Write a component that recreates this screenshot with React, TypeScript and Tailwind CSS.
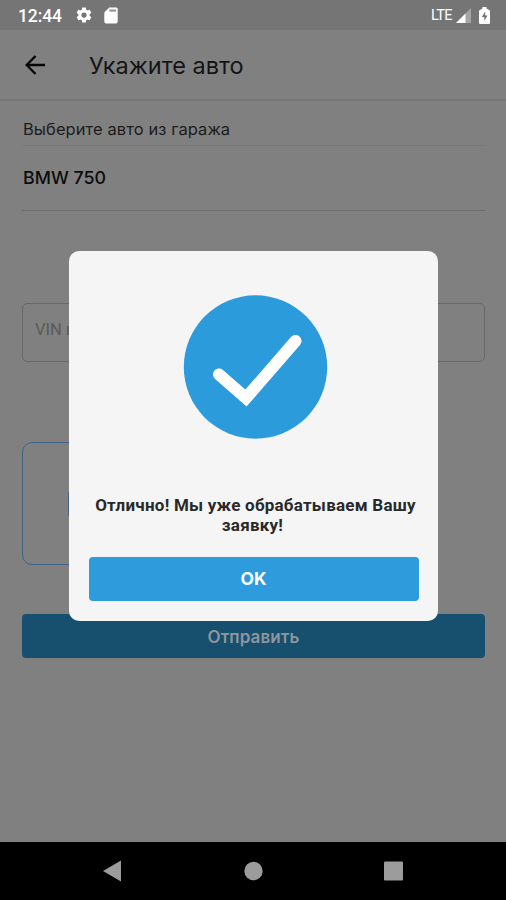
import React from "react";

function StatusBar() {
  return (
    <div className="flex h-[30px] shrink-0 items-center justify-between bg-[#757575] pl-[18px] pr-[16px] text-white">
      <div className="flex items-center">
        <span className="w-[57px] whitespace-nowrap pt-px font-['Roboto'] text-[17.5px] font-medium leading-[30px] tracking-[-0.1px]">12:44</span>
        <svg width="18" height="18" viewBox="0 0 24 24" fill="currentColor">
          <path d="M19.43 12.98c.04-.32.07-.64.07-.98s-.03-.66-.07-.98l2.11-1.65c.19-.15.24-.42.12-.64l-2-3.46c-.12-.22-.39-.3-.61-.22l-2.49 1c-.52-.4-1.08-.73-1.69-.98l-.38-2.65A.49.49 0 0 0 14 2h-4c-.25 0-.46.18-.49.42l-.38 2.65c-.61.25-1.17.59-1.69.98l-2.49-1c-.23-.09-.49 0-.61.22l-2 3.46c-.13.22-.07.49.12.64l2.11 1.65c-.04.32-.07.65-.07.98s.03.66.07.98l-2.11 1.65c-.19.15-.24.42-.12.64l2 3.46c.12.22.39.3.61.22l2.49-1c.52.4 1.08.73 1.69.98l.38 2.65c.03.24.24.42.49.42h4c.25 0 .46-.18.49-.42l.38-2.65c.61-.25 1.17-.59 1.69-.98l2.49 1c.23.09.49 0 .61-.22l2-3.46c.12-.22.07-.49-.12-.64l-2.11-1.65zM12 15.5a3.5 3.5 0 1 1 0-7 3.5 3.5 0 0 1 0 7z" />
        </svg>
        <svg className="ml-[8px]" width="20" height="19" viewBox="0 0 24 24" preserveAspectRatio="none" fill="currentColor">
          <path d="M18 2h-8L4.02 8 4 20c0 1.100.9 2 2 2h12c1.100 0 2-.9 2-2V4c0-1.100-.9-2-2-2z" />
          <path d="M10 4.300h8v2.900h-8z" fill="#9a9a9a" />
        </svg>
      </div>
      <div className="flex items-center">
        <span className="w-[25px] whitespace-nowrap pt-px font-['Roboto'] text-[14.500px] leading-[30px] tracking-[-0.6px]">LTE</span>
        <svg width="15" height="15" viewBox="0 0 15 15">
          <path d="M15 0v15H0z" fill="#a5a5a5" />
          <path d="M9.500 5.500V15H0z" fill="#fff" />
        </svg>
        <svg className="ml-[8px]" width="11" height="17" viewBox="0 0 11 17">
          <path d="M3.500 0h4v1.500L10.200 3q.8.300.8 1v12q0 1-1 1H1q-1 0-1-1V4q0-.7.8-1l2.700-1.500z" fill="#fff" />
          <path d="M6.200 4.500 2.800 10h2.500v4l3.200-5.500H6.200z" fill="#757575" />
        </svg>
      </div>
    </div>
  );
}

function NavBar() {
  return (
    <div className="flex h-[58px] shrink-0 items-center justify-center bg-black">
      <svg className="w-full" height="58" viewBox="0 0 506 58" fill="#9c9c9c">
        <path d="M103 29 121 18.500v21z" />
        <circle cx="253.500" cy="29" r="9.200" />
        <rect x="384" y="19.500" width="19" height="19" rx="1" />
      </svg>
    </div>
  );
}

function SuccessDialog() {
  return (
    <div className="absolute left-[69px] top-[251px] flex h-[370px] w-[369px] flex-col items-center rounded-[10px] bg-[#f5f5f5] px-[19px] pt-[44px]">
      <svg width="145" height="144" viewBox="0 0 145 144" className="ml-[4px] shrink-0">
        <circle cx="72.500" cy="72" r="71.700" fill="#2b9bdc" />
        <path d="M36 79.500 63 103 112.500 46" fill="none" stroke="#fff" strokeWidth="12" strokeLinecap="round" strokeLinejoin="miter" />
      </svg>
      <p className="mt-[56px] flex flex-col items-center whitespace-nowrap text-center font-['Roboto'] text-[17px] font-bold leading-[20px] tracking-[0.23px] text-[#292929]">
        <span className="pl-[4px]">Отлично! Мы уже обрабатываем Вашу</span>
        <span className="pr-[2px]">заявку!</span>
      </p>
      <button className="mt-[22px] h-[44px] w-[330px] shrink-0 rounded-[4px] bg-[#2e9bdc] font-['Inter'] text-[17.5px] font-bold leading-[44px] text-white">OK</button>
    </div>
  );
}

export default function App() {
  return (
    <div className="relative flex h-[900px] w-[506px] flex-col overflow-hidden bg-[#808080] font-['Inter',sans-serif]">
      <StatusBar />
      <header className="flex h-[71px] shrink-0 items-center border-b-2 border-[#777777] pl-[25px]">
        <svg width="21" height="20" viewBox="0 0 21 20" fill="none" stroke="#050505" strokeWidth="2.300">
          <path d="M20 10H2M10.500 1 1.700 10l8.800 9" />
        </svg>
        <h1 className="ml-[43px] whitespace-nowrap pt-[2px] text-[23.5px] leading-[30px] text-[#151515]">Укажите авто</h1>
      </header>
      <main className="flex flex-1 flex-col pl-[22px] pr-[21px]">
        <div className="h-[45px] border-b border-[#787878] pt-[16px] pl-px">
          <span className="block whitespace-nowrap text-[16.5px] leading-[24px] tracking-[0.07px] text-[#1c1c1c]">Выберите авто из гаража</span>
        </div>
        <div className="h-[65px] border-b border-[#6d6d6d] pt-[20px] pl-px">
          <span className="block whitespace-nowrap text-[17.8px] font-medium leading-[24px] text-[#0c0c0c]">BMW 750</span>
        </div>
        <div className="mt-[92px] flex h-[59px] shrink-0 items-center rounded-[5px] border border-[#686868] pl-[12px] font-['Roboto'] text-[16.500px] text-[#5a5a5a]">
          <span className="-mt-[4px]">VIN номер</span>
        </div>
        <div className="mt-[80px] flex h-[123px] w-[140px] shrink-0 items-center rounded-[10px] border-[1.500px] border-[#406385] pl-[45px]">
          <div className="h-[24px] w-[48px] bg-[#426382]" />
        </div>
        <div className="mt-[49px] h-[44px] shrink-0 rounded-[4px] bg-[#174f6f] text-center text-[17px] font-semibold leading-[46px] tracking-[0.1px] text-[#8d979d]">Отправить</div>
      </main>
      <NavBar />
      <SuccessDialog />
    </div>
  );
}
